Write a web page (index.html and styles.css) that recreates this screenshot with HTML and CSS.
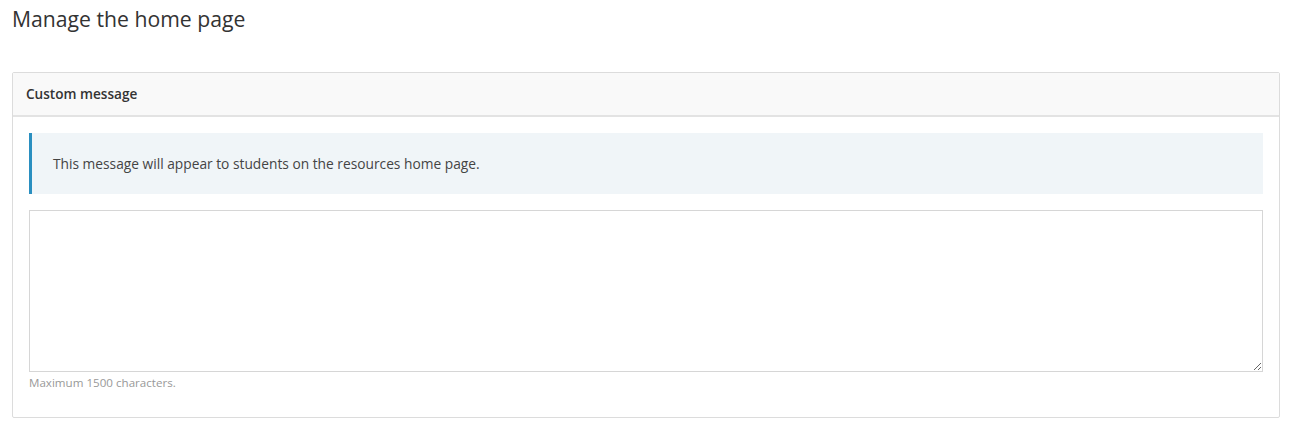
FILE: index.html
```html
<!DOCTYPE html>
<html lang="en">
<head>
<meta charset="utf-8">
<title>Manage the home page</title>
<link rel="stylesheet" href="styles.css">
</head>
<body>
<div class="page">
  <h1 class="page-title">Manage the home page</h1>
  <section class="panel">
    <div class="panel-heading">Custom message</div>
    <div class="panel-body">
      <div class="alert-info">This message will appear to students on the resources home page.</div>
      <textarea class="message-input" aria-label="Custom message"></textarea>
      <div class="help-text">Maximum 1500 characters.</div>
    </div>
  </section>
</div>
</body>
</html>
```
FILE: styles.css
```css
html, body {
  margin: 0;
  padding: 0;
  background: #fff;
}
body {
  font-family: "Open Sans", "Liberation Sans", sans-serif;
  color: #333;
}
.page {
  padding: 0 20px 0 12px;
}
.page-title {
  margin: 0;
  padding-top: 4px;
  font-size: 21.2px;
  font-weight: 400;
  line-height: 30px;
  color: #333;
  height: 68px;
}
.panel {
  border: 1px solid #dcdcdc;
  border-radius: 2px;
  background: #fff;
}
.panel-heading {
  background: #f9f9f9;
  border-bottom: 2px solid #e3e3e3;
  height: 42px;
  line-height: 42px;
  padding: 0 13px;
  font-size: 13.6px;
  font-weight: 600;
  color: #333;
}
.panel-body {
  padding: 16px 16px 26px;
}
.alert-info {
  background: #f0f5f8;
  border-left: 3px solid #2a8fc0;
  padding: 20px 21px;
  font-size: 13.75px;
  line-height: 21px;
  color: #444;
}
.message-input {
  display: block;
  box-sizing: border-box;
  width: 100%;
  height: 162px;
  margin-top: 16px;
  border: 1px solid #d6d6d6;
  border-radius: 0;
  resize: vertical;
  font-family: inherit;
  font-size: 13px;
  padding: 6px 8px;
}
.help-text {
  margin-top: 3px;
  font-size: 11.6px;
  line-height: 16px;
  color: #999;
}
```
